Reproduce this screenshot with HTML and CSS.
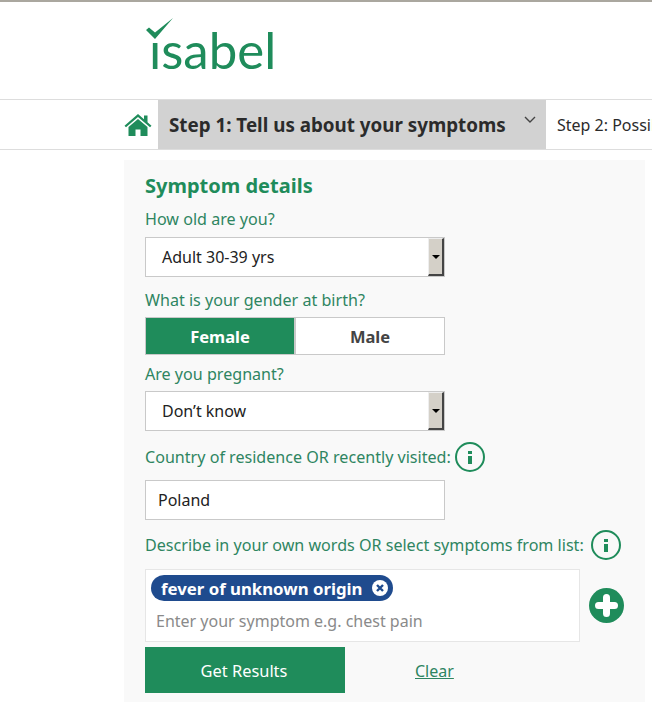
FILE: index.html
```html
<!DOCTYPE html>
<html lang="en">

<head>
    <meta charset="UTF-8">
    <meta name="viewport" content="width=device-width, initial-scale=1.0">
    <title>Isabel | Symptom Checker</title>
    <link rel="stylesheet" href="styles.css">
</head>

<body>
    <!-- Header Content -->
    <div class="header">
        <div class="logo">
            <svg class="logo-check" width="29" height="22" viewBox="0 0 29 22">
                <path d="M1 12 L4 9.5 L10 14.5 L28 0 L10 21 Z" fill="#1f8c5b"></path>
            </svg>
            <span class="logo-text">ısabel</span>
        </div>
    </div>

    <!-- Steps -->
    <div class="steps">
        <div class="home-tab">
            <svg width="28" height="24" viewBox="0 0 28 24">
                <path d="M14 1 L20 6.2 V2.5 H23.5 V9.2 L27.5 12.7 L26 14.2 L14 4 L2 14.2 L0.5 12.7 Z" fill="#1f8c5b"></path>
                <path d="M14 6 L23.5 14 V23 H16.5 V16.5 H11.5 V23 H4.5 V14 Z" fill="#1f8c5b"></path>
            </svg>
        </div>
        <div class="step step-active">
            <span>Step 1: Tell us about your symptoms</span>
            <svg class="step-arrow" width="12" height="7" viewBox="0 0 12 7">
                <path d="M1 1 L6 6 L11 1" fill="none" stroke="#444" stroke-width="1.4"></path>
            </svg>
        </div>
        <div class="step step-next">Step 2: Possible causes</div>
    </div>

    <!-- Form -->
    <div class="panel">
        <h2>Symptom details</h2>

        <label class="field-label label-age">How old are you?</label>
        <div class="select">
            <span class="select-value">Adult 30-39 yrs</span>
            <span class="select-btn"><i></i></span>
        </div>

        <label class="field-label label-gender">What is your gender at birth?</label>
        <div class="gender">
            <button class="gender-btn selected">Female</button>
            <button class="gender-btn">Male</button>
        </div>

        <label class="field-label label-pregnant">Are you pregnant?</label>
        <div class="select select-pregnant">
            <span class="select-value">Don’t know</span>
            <span class="select-btn"><i></i></span>
        </div>

        <div class="label-row row-country">
            <label class="field-label">Country of residence OR recently visited:</label>
            <span class="info"><b></b><b></b></span>
        </div>
        <input class="text-input" type="text" value="Poland">

        <div class="label-row row-symptom">
            <label class="field-label">Describe in your own words OR select symptoms from list:</label>
            <span class="info"><b></b><b></b></span>
        </div>
        <div class="symptom-row">
            <div class="symptom-box">
                <span class="tag">fever of unknown origin
                    <svg width="16" height="16" viewBox="0 0 16 16">
                        <circle cx="8" cy="8" r="8" fill="#fff"></circle>
                        <path d="M5 5 L11 11 M11 5 L5 11" stroke="#1f4b8e" stroke-width="2.4"></path>
                    </svg>
                </span>
                <div class="placeholder">Enter your symptom e.g. chest pain</div>
            </div>
            <svg class="add-btn" width="35" height="35" viewBox="0 0 35 35">
                <circle cx="17.5" cy="17.5" r="17.5" fill="#1f8c5b"></circle>
                <path d="M17.5 9.5 V25.5 M9.5 17.5 H25.5" stroke="#fff" stroke-width="7" stroke-linecap="round"></path>
            </svg>
        </div>

        <div class="actions">
            <button class="submit">Get Results</button>
            <a class="clear" href="#">Clear</a>
        </div>
    </div>
</body>

</html>
```

FILE: styles.css
```css
body {
    font-family: "Noto Sans", Arial, sans-serif;
    margin: 0;
    padding: 0;
    background-color: white;
    height: 702px;
    overflow: hidden;
    border-top: 2px solid #aaa79f;
    box-sizing: border-box;
}

.header {
    height: 97px;
    padding-left: 145px;
    box-sizing: border-box;
}

.logo {
    position: relative;
    padding-top: 18px;
    height: 82px;
    box-sizing: border-box;
}

.logo-check {
    position: absolute;
    left: 0;
    top: 16px;
}

.logo-text {
    font-family: "Lato", sans-serif;
    font-size: 51px;
    line-height: 60px;
    color: #1f8c5b;
    margin-left: 4px;
}

.steps {
    display: flex;
    height: 51px;
    border-top: 1px solid #ddd;
    border-bottom: 1px solid #ddd;
    box-sizing: border-box;
    padding-left: 124px;
    overflow: hidden;
    white-space: nowrap;
}

.home-tab {
    flex: none;
    width: 34px;
    display: flex;
    align-items: center;
}

.step {
    flex: none;
    display: flex;
    align-items: center;
    font-size: 16px;
    color: #2b2b2b;
}

.step-active {
    position: relative;
    width: 388px;
    box-sizing: border-box;
    padding-left: 11px;
    background-color: #d2d2d2;
    font-weight: bold;
    font-size: 18.8px;
}

.step-arrow {
    position: absolute;
    left: 366px;
    top: 16px;
}

.step-next {
    padding-left: 11px;
}

.panel {
    margin: 10px 0 0 124px;
    width: 521px;
    height: 542px;
    box-sizing: border-box;
    padding: 14px 0 0 21px;
    background-color: #f9f9f9;
}

h2 {
    margin: 0;
    font-size: 20px;
    line-height: 24px;
    color: #1f8c5b;
}

.field-label {
    display: block;
    font-size: 16.1px;
    line-height: 22px;
    margin-top: 6px;
    color: #2e8561;
}

.label-age {
    margin-top: 10px;
}

.select {
    display: flex;
    justify-content: space-between;
    width: 300px;
    height: 40px;
    margin-top: 7px;
    box-sizing: border-box;
    border: 1px solid #c9c9c9;
    background-color: white;
}

.select-pregnant {
    margin-top: 6px;
}

.select-value {
    padding-left: 16px;
    line-height: 38px;
    font-size: 16px;
    color: #222;
}

.select-btn {
    width: 16px;
    display: flex;
    align-items: center;
    justify-content: center;
    background-color: #d4d0c8;
    border-top: 1px solid #eee;
    border-left: 1px solid #eee;
    border-right: 2px solid #444;
    border-bottom: 2px solid #444;
    box-sizing: border-box;
}

.select-btn i {
    border-top: 4px solid black;
    border-left: 4px solid transparent;
    border-right: 4px solid transparent;
}

.label-gender {
    margin-top: 12px;
}

.gender {
    display: flex;
    width: 300px;
    height: 38px;
    margin-top: 6px;
    box-sizing: border-box;
    border: 1px solid #c9c9c9;
    background-color: white;
}

.gender-btn {
    flex: 1;
    border: none;
    padding: 0;
    background-color: white;
    font-family: inherit;
    font-size: 16.5px;
    font-weight: bold;
    color: #444;
}

.gender-btn.selected {
    background-color: #1f8c5b;
    color: white;
    border-right: 2px solid #c9c9c9;
}

.label-pregnant {
    margin-top: 8px;
}

.label-row {
    display: flex;
    align-items: center;
}

.label-row .field-label {
    margin-top: 0;
}

.row-country {
    gap: 4px;
    margin-top: 10px;
    height: 32px;
}

.row-symptom {
    gap: 7px;
    margin-top: 9px;
    height: 32px;
}

.info {
    width: 30px;
    height: 30px;
    box-sizing: border-box;
    border: 2px solid #1f8c5b;
    border-radius: 50%;
    display: flex;
    flex-direction: column;
    align-items: center;
    justify-content: center;
    gap: 2px;
}

.info b {
    width: 4px;
    height: 8px;
    background-color: #1f8c5b;
}

.info b:first-child {
    height: 3px;
}

.text-input {
    display: block;
    width: 300px;
    height: 40px;
    margin: 7px 0 0;
    padding: 0 12px;
    box-sizing: border-box;
    border: 1px solid #c9c9c9;
    font-family: inherit;
    font-size: 16px;
    color: #222;
}

.symptom-row {
    display: flex;
    align-items: center;
    gap: 9px;
    margin-top: 8px;
}

.symptom-box {
    width: 435px;
    height: 73px;
    box-sizing: border-box;
    padding: 5px 5px 0;
    border: 1px solid #e6e6e6;
    background-color: white;
}

.tag {
    display: inline-flex;
    align-items: center;
    gap: 10px;
    height: 26px;
    padding: 0 5px 0 10px;
    border-radius: 13px;
    background-color: #1f4b8e;
    color: white;
    font-size: 16.8px;
    font-weight: bold;
}

.placeholder {
    margin: 9px 0 0 5px;
    font-size: 16px;
    line-height: 22px;
    color: #8a8a8a;
}

.actions {
    display: flex;
    align-items: center;
    margin-top: 5px;
}

.submit {
    width: 200px;
    height: 46px;
    border: none;
    padding: 0 2px 0 0;
    background-color: #1f8c5b;
    color: white;
    font-family: inherit;
    font-size: 16.4px;
}

.clear {
    margin-left: 70px;
    padding-top: 2px;
    font-size: 16px;
    color: #2e8561;
}
```
